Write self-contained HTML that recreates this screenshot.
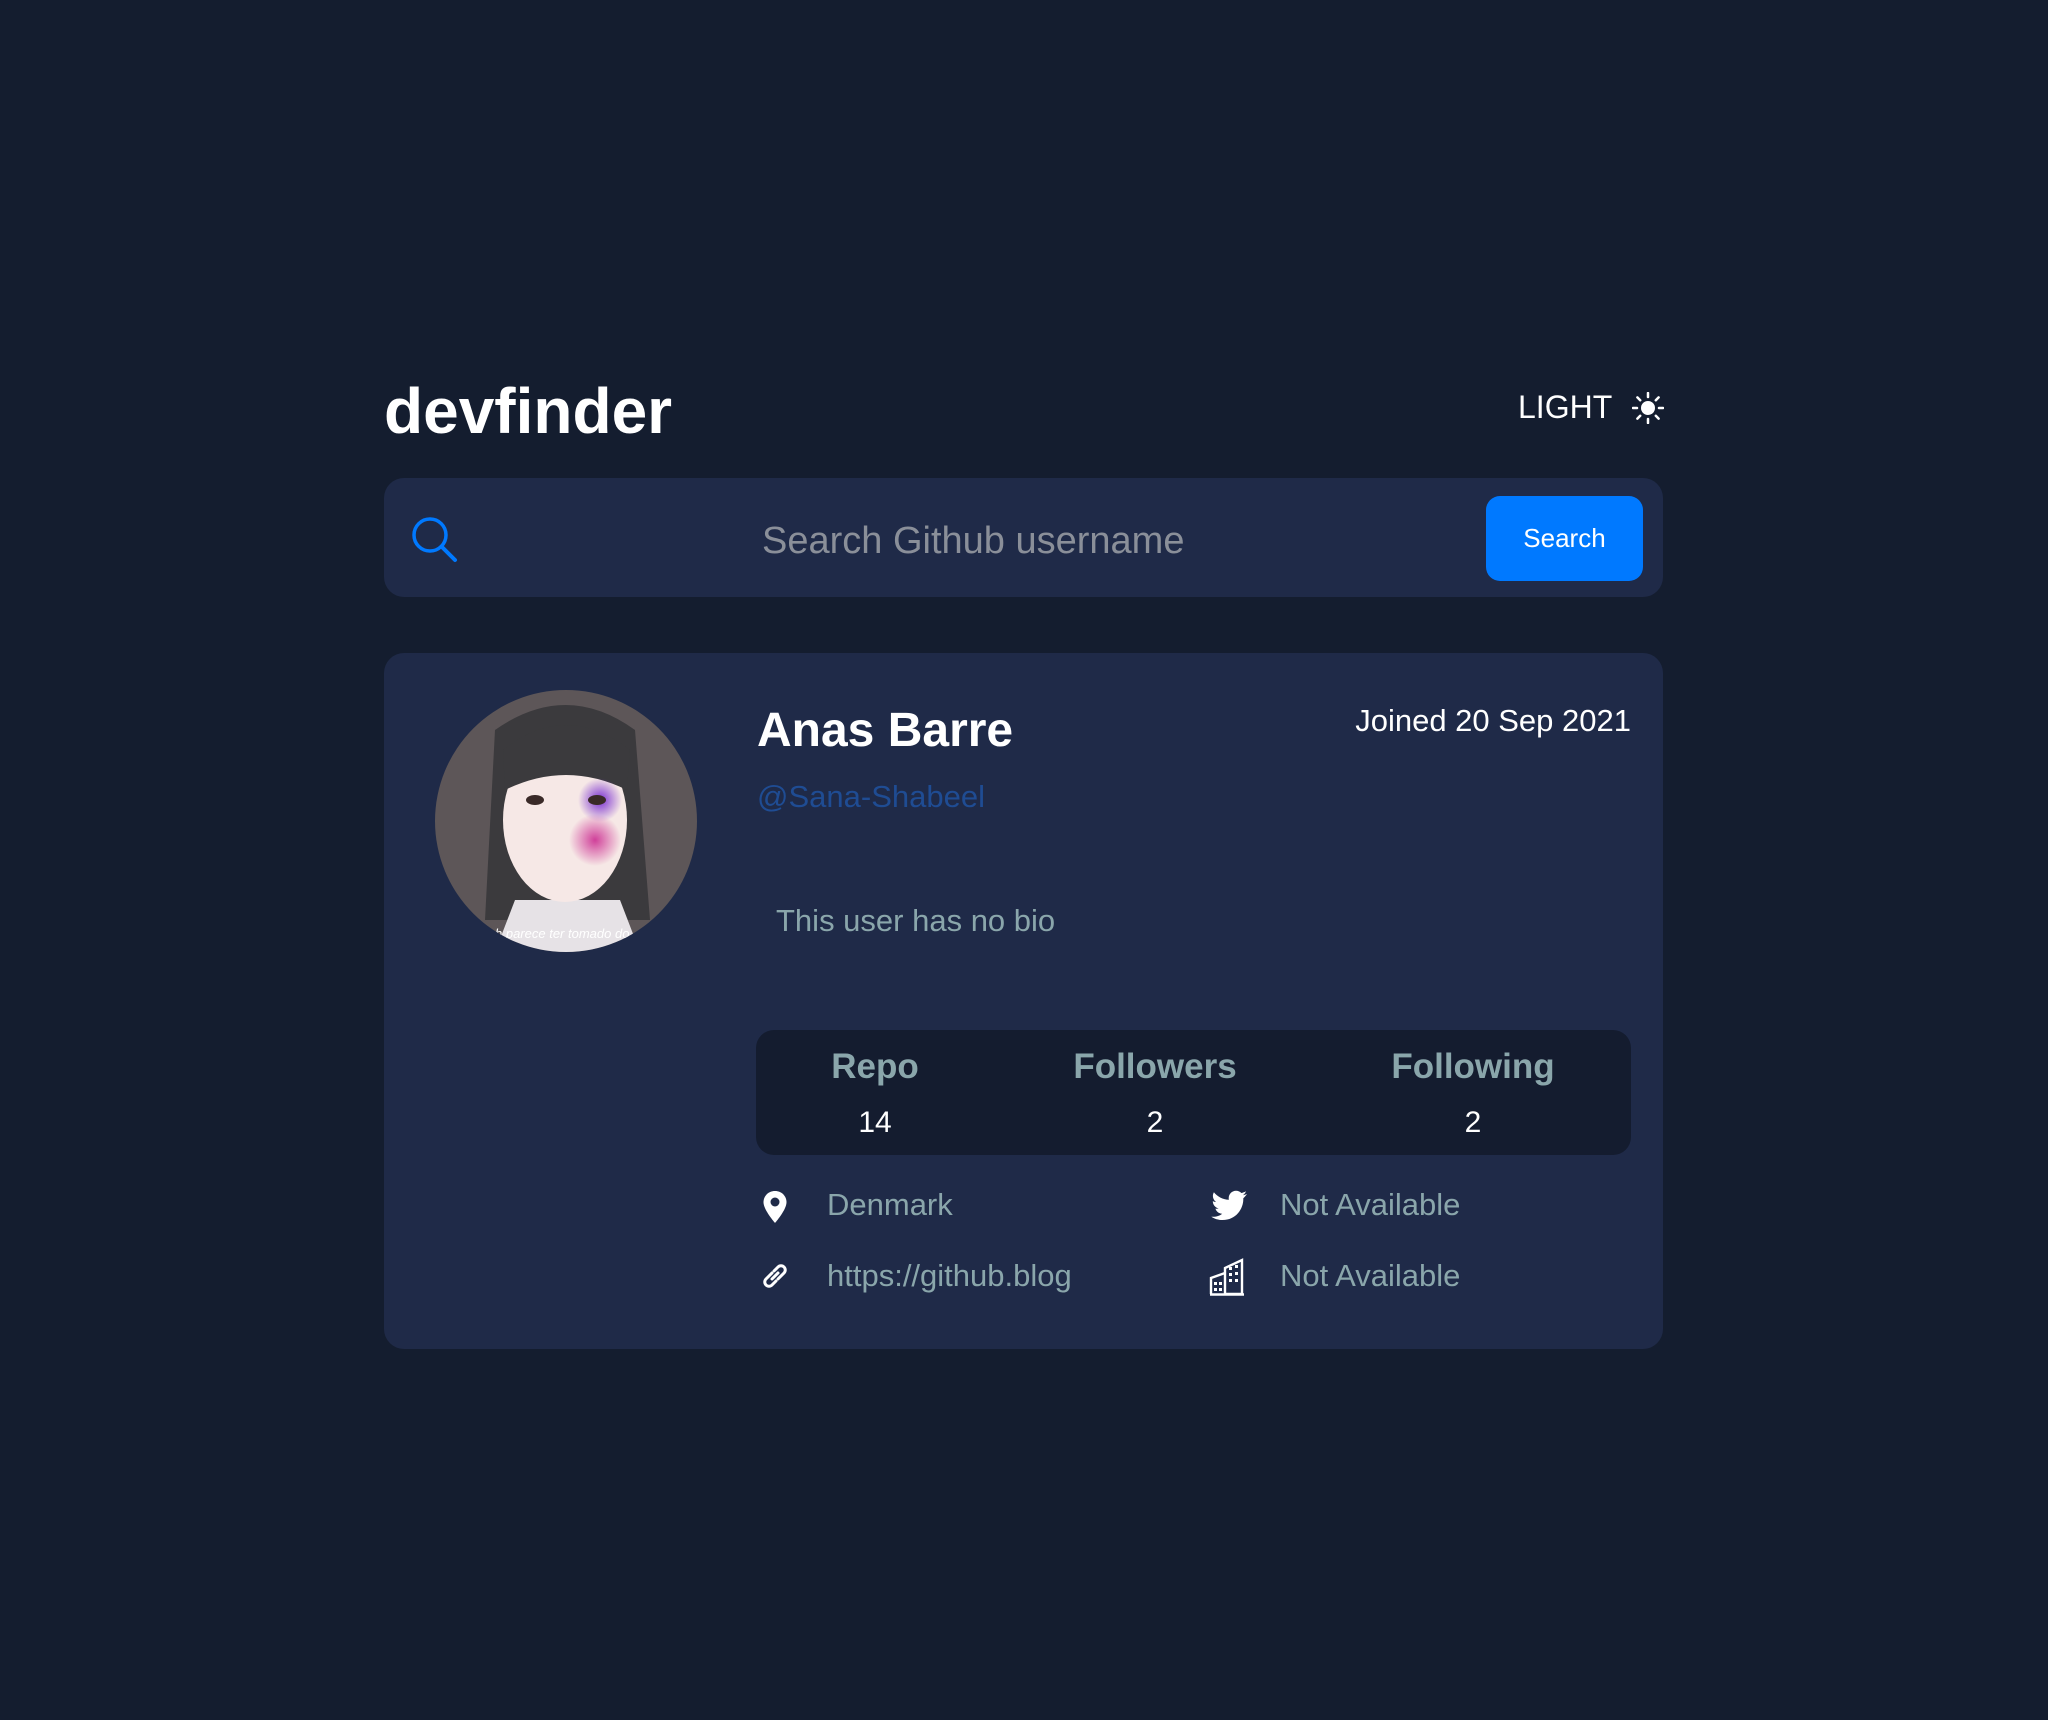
<!DOCTYPE html>
<html><head><meta charset="utf-8"><style>
*{margin:0;padding:0;box-sizing:border-box}
body{width:2048px;height:1720px;background:#141d2f;font-family:"Liberation Sans",sans-serif;position:relative;overflow:hidden}
.a{position:absolute;white-space:nowrap}
</style></head><body>
<div class="a" style="left:384px;top:371px;font-size:64px;font-weight:bold;color:#fff;line-height:80px">devfinder</div>
<div class="a" style="left:1518px;top:388px;font-size:32px;color:#fff;line-height:38px">LIGHT</div>
<svg class="a" style="left:1632px;top:392px" width="32" height="32" viewBox="0 0 32 32"><circle cx="16" cy="16" r="7" fill="#fff"/><g stroke="#fff" stroke-width="2.5" stroke-linecap="round"><path d="M16 1v4M16 27v4M1 16h4M27 16h4M5.4 5.4l2.8 2.8M23.8 23.8l2.8 2.8M5.4 26.6l2.8-2.8M23.8 8.2l2.8-2.8"/></g></svg>

<div class="a" style="left:384px;top:478px;width:1279px;height:119px;background:#1f2a48;border-radius:20px"></div>
<svg class="a" style="left:410px;top:515px" width="48" height="48" viewBox="0 0 48 48"><circle cx="20" cy="20" r="16" fill="none" stroke="#0079ff" stroke-width="3.5"/><path d="M31.5 31.5L45 45" stroke="#0079ff" stroke-width="4" stroke-linecap="round"/></svg>
<div class="a" style="left:762px;top:519px;font-size:38px;color:#8a8f99;line-height:44px">Search Github username</div>
<div class="a" style="left:1486px;top:496px;width:157px;height:85px;background:#0079ff;border-radius:14px;color:#fff;font-size:26px;line-height:85px;text-align:center">Search</div>

<div class="a" style="left:384px;top:653px;width:1279px;height:696px;background:#1f2a48;border-radius:20px"></div>
<svg class="a" style="left:435px;top:690px" width="262" height="262" viewBox="0 0 262 262">
<defs><clipPath id="c"><circle cx="131" cy="131" r="131"/></clipPath><radialGradient id="b" cx=".5" cy=".5" r=".5"><stop offset="0" stop-color="#7a2fd0"/><stop offset="1" stop-color="#7a2fd0" stop-opacity="0"/></radialGradient><radialGradient id="p" cx=".5" cy=".5" r=".5"><stop offset="0" stop-color="#d0409a"/><stop offset="1" stop-color="#d0409a" stop-opacity="0"/></radialGradient></defs>
<g clip-path="url(#c)"><rect width="262" height="262" fill="#5d5658"/>
<path d="M60 40Q131-10 200 40L215 230H50Z" fill="#3b3a3d"/>
<path d="M80 210L60 262H205L185 210Z" fill="#e6e2e6"/>
<ellipse cx="130" cy="130" rx="62" ry="82" fill="#f6e8e6"/>
<path d="M68 60Q131 10 195 60L192 100Q131 70 70 100Z" fill="#3b3a3d"/>
<circle cx="165" cy="110" r="22" fill="url(#b)"/><circle cx="160" cy="150" r="26" fill="url(#p)"/>
<ellipse cx="100" cy="110" rx="9" ry="5" fill="#3a2a28"/><ellipse cx="162" cy="110" rx="9" ry="5" fill="#3a2a28"/>
<text x="60" y="248" font-size="13" font-style="italic" fill="#fff" font-family="Liberation Sans">h parece ter tomado do</text></g></svg>

<div class="a" style="left:757px;top:703px;font-size:48px;font-weight:bold;color:#fff;line-height:56px">Anas Barre</div>
<div class="a" style="left:1348px;top:702px;width:283px;text-align:right;font-size:31px;color:#fff;line-height:38px">Joined 20 Sep 2021</div>
<div class="a" style="left:757px;top:778px;font-size:31px;color:#1f4c93;line-height:38px">@Sana-Shabeel</div>
<div class="a" style="left:776px;top:902px;font-size:31px;color:#8aa6ab;line-height:38px">This user has no bio</div>

<div class="a" style="left:756px;top:1030px;width:875px;height:125px;background:#141c2f;border-radius:18px"></div>
<div class="a" style="left:775px;top:1046px;width:200px;text-align:center;font-size:35px;font-weight:bold;color:#8aa6ab;line-height:42px">Repo</div>
<div class="a" style="left:1035px;top:1046px;width:240px;text-align:center;font-size:35px;font-weight:bold;color:#8aa6ab;line-height:42px">Followers</div>
<div class="a" style="left:1353px;top:1046px;width:240px;text-align:center;font-size:35px;font-weight:bold;color:#8aa6ab;line-height:42px">Following</div>
<div class="a" style="left:775px;top:1105px;width:200px;text-align:center;font-size:30px;color:#fff;line-height:36px">14</div>
<div class="a" style="left:1035px;top:1105px;width:240px;text-align:center;font-size:30px;color:#fff;line-height:36px">2</div>
<div class="a" style="left:1353px;top:1105px;width:240px;text-align:center;font-size:30px;color:#fff;line-height:36px">2</div>

<svg class="a" style="left:762px;top:1190px" width="26" height="34" viewBox="0 0 26 34"><path d="M13 1C6.4 1 1.5 6 1.5 12.3 1.5 20 13 33 13 33S24.5 20 24.5 12.3C24.5 6 19.6 1 13 1Z" fill="#fff"/><circle cx="13" cy="12" r="4.5" fill="#1f2a48"/></svg>
<div class="a" style="left:827px;top:1186px;font-size:31px;color:#8aa6ab;line-height:38px">Denmark</div>
<svg class="a" style="left:761px;top:1262px" width="28" height="28" viewBox="0 0 28 28" fill="none" stroke="#fff" stroke-width="3" stroke-linecap="round"><path d="M11 11l-6 6a4.2 4.2 0 006 6l4-4"/><path d="M17 17l6-6a4.2 4.2 0 00-6-6l-4 4"/><path d="M11 17l6-6"/></svg>
<div class="a" style="left:827px;top:1257px;font-size:31px;color:#8aa6ab;line-height:38px">https://github.blog</div>
<svg class="a" style="left:1210px;top:1190px" width="38" height="32" viewBox="0 0 38 32"><path d="M37 4c-1.3.6-2.7 1-4.2 1.2 1.5-.9 2.7-2.4 3.200-4-1.4.8-3 1.400-4.700 1.800C30 1.600 28.100.8 26 .8c-4 0-7.300 3.300-7.300 7.300 0 .6.1 1.100.2 1.700C12.800 9.500 7.500 6.600 3.900 2.200c-.6 1.100-1 2.300-1 3.700 0 2.500 1.300 4.800 3.200 6.100-1.200 0-2.300-.4-3.300-.9v.1c0 3.500 2.500 6.500 5.900 7.200-.6.2-1.300.3-1.900.3-.5 0-.9 0-1.400-.1.9 2.900 3.600 5 6.800 5.100-2.500 2-5.700 3.100-9.100 3.100-.6 0-1.200 0-1.800-.1 3.200 2.100 7.100 3.300 11.200 3.300 13.500 0 20.800-11.200 20.800-20.800v-.9C34.800 6.800 36 5.500 37 4Z" fill="#fff"/></svg>
<div class="a" style="left:1280px;top:1186px;font-size:31px;color:#8aa6ab;line-height:38px">Not Available</div>
<svg class="a" style="left:1209px;top:1258px" width="36" height="38" viewBox="0 0 36 38" fill="none" stroke="#fff" stroke-width="2.4"><path d="M16 36V10L33 2V36Z"/><path d="M2 36V20L16 15"/><path d="M1 36.5h34"/><g fill="#fff" stroke="none"><rect x="20" y="9" width="3" height="3"/><rect x="26" y="7" width="3" height="3"/><rect x="20" y="15" width="3" height="3"/><rect x="26" y="14" width="3" height="3"/><rect x="20" y="21" width="3" height="3"/><rect x="26" y="21" width="3" height="3"/><rect x="5" y="24" width="3" height="3"/><rect x="10" y="24" width="3" height="3"/><rect x="5" y="30" width="3" height="3"/><rect x="10" y="30" width="3" height="3"/></g></svg>
<div class="a" style="left:1280px;top:1257px;font-size:31px;color:#8aa6ab;line-height:38px">Not Available</div>
</body></html>
